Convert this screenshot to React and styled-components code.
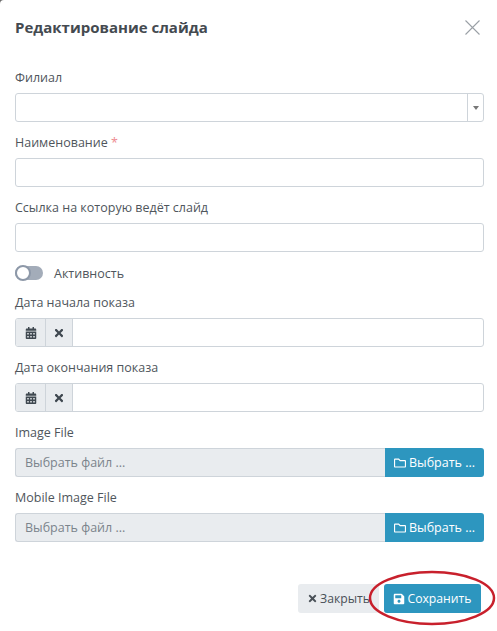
import React from "react";
import styled, { createGlobalStyle } from "styled-components";
import { FaCalendarAlt, FaTimes, FaRegFolder, FaSave } from "react-icons/fa";

const Global = createGlobalStyle`
  html, body { margin: 0; padding: 0; background: #fff; }
  body { font-family: "Open Sans", "Liberation Sans", sans-serif; color: #495057; }
`;
const Backdrop = styled.div`
  background: #6b6b6b; width: 497px; height: 631px;
`;
const Page = styled.div`
  position: relative; width: 497px; height: 631px; overflow: hidden; background: #fff;
  border-radius: 4px 0 0 0;
`;
const Header = styled.header`
  display: flex; justify-content: space-between; align-items: center;
  height: 54px; padding: 0 17px 0 15px; box-sizing: border-box;
`;
const Title = styled.h1`
  margin: 0; font-size: 15px; font-weight: 700; color: #444a50;
`;
const Close = styled.button`
  border: 0; background: none; padding: 0; width: 15px; height: 15px; display: flex;
  svg { display: block; }
`;
const Body = styled.div`
  padding: 13px 13px 0 15px;
`;
const Field = styled.div`
  margin-bottom: 10px;
`;
const Label = styled.label`
  display: block; font-size: 12.5px; line-height: 20px; padding-top: 1px; margin-bottom: 5px; color: #4f565c;
  span { color: #ee8a90; }
`;
const InputBox = styled.div`
  display: flex; height: 29px; box-sizing: border-box; border: 1px solid #ced4da;
  border-radius: 3px; background: #fff; overflow: hidden;
`;
const SelectArrow = styled.div`
  margin-left: auto; width: 15px; border-left: 1px solid #ced4da; display: flex;
  align-items: center; justify-content: center;
  &::after {
    content: ""; border-left: 3px solid transparent; border-right: 3px solid transparent;
    border-top: 4px solid #777;
  }
`;
const Addon = styled.div`
  width: 27px; box-sizing: border-box; background: #e9ecef; border-right: 1px solid #ced4da; display: flex;
  align-items: center; justify-content: center; color: #3f4850;
  &:first-child { width: 30px; }
`;
const ToggleRow = styled.div`
  display: flex; align-items: center; height: 22px; margin-bottom: 8px; gap: 11px;
  font-size: 12.5px; color: #4f565c;
`;
const Toggle = styled.div`
  position: relative; width: 28px; height: 14px; border-radius: 7px; background: #a3acb9;
  &::before {
    content: ""; position: absolute; left: 0; top: -1px; width: 12px; height: 12px;
    background: #fff; border: 2px solid #8d98a8; border-radius: 50%;
  }
`;
const FileRow = styled.div`
  display: flex; height: 29px;
`;
const FileName = styled.div`
  flex: 1; box-sizing: border-box; background: #e9ecef; border: 1px solid #ced4da; border-right: 0;
  border-radius: 3px 0 0 3px; padding-left: 9px; font-size: 12.5px; line-height: 27px; color: #7b848c;
`;
const FileButton = styled.button`
  width: 99px; border: 0; background: #2d96bf; color: #fff; border-radius: 0 3px 3px 0;
  font: 500 12.5px "Open Sans", sans-serif; display: flex; align-items: center; justify-content: center;
  gap: 3px; padding: 0;
`;
const Footer = styled.footer`
  display: flex; justify-content: flex-end; gap: 5px; padding: 32px 16px 0 0;
`;
const Button = styled.button`
  height: 29px; border: 0; border-radius: 3px; padding: 0;
  width: ${p => p.$w}px; background: ${p => p.$primary ? "#2d96bf" : "#e9ecef"};
  color: ${p => p.$primary ? "#fff" : "#495057"};
  font: ${p => p.$primary ? 500 : 400} 12.2px "Open Sans", sans-serif;
  display: flex; align-items: center; justify-content: center; gap: 2px;
`;
const Ellipse = styled.svg`
  position: absolute; left: 368px; top: 570px; pointer-events: none;
`;

const CloseGlyph = () => (
  <svg width="15" height="15" viewBox="0 0 15 15">
    <path d="M.5.5 14.5 14.5M14.5.5.5 14.5" stroke="#9aa0a6" strokeWidth="1.1" fill="none" />
  </svg>
);

const Text = ({ label, req }) => (
  <Field>
    <Label>{label}{req && <span> *</span>}</Label>
    <InputBox />
  </Field>
);
const DateField = ({ label }) => (
  <Field>
    <Label>{label}</Label>
    <InputBox>
      <Addon><FaCalendarAlt size={12} /></Addon>
      <Addon><FaTimes size={12} /></Addon>
    </InputBox>
  </Field>
);
const FileField = ({ label }) => (
  <Field>
    <Label>{label}</Label>
    <FileRow>
      <FileName>Выбрать файл ...</FileName>
      <FileButton><FaRegFolder size={12} />Выбрать ...</FileButton>
    </FileRow>
  </Field>
);

export default function App() {
  return (
    <Backdrop>
      <Global />
      <Page>
        <Header>
          <Title>Редактирование слайда</Title>
          <Close><CloseGlyph /></Close>
        </Header>
        <Body>
          <Field>
            <Label>Филиал</Label>
            <InputBox><SelectArrow /></InputBox>
          </Field>
          <Text label="Наименование" req />
          <Text label="Ссылка на которую ведёт слайд" />
          <ToggleRow><Toggle />Активность</ToggleRow>
          <DateField label="Дата начала показа" />
          <DateField label="Дата окончания показа" />
          <FileField label="Image File" />
          <FileField label="Mobile Image File" />
        </Body>
        <Footer>
          <Button $w={81}><FaTimes size={11} />Закрыть</Button>
          <Button $w={97} $primary><FaSave size={12} />Сохранить</Button>
        </Footer>
        <Ellipse width="128" height="56" viewBox="0 0 128 56">
          <ellipse cx="64" cy="28" rx="62" ry="26" fill="none" stroke="#c8202c" strokeWidth="2.5" />
        </Ellipse>
      </Page>
    </Backdrop>
  );
}
